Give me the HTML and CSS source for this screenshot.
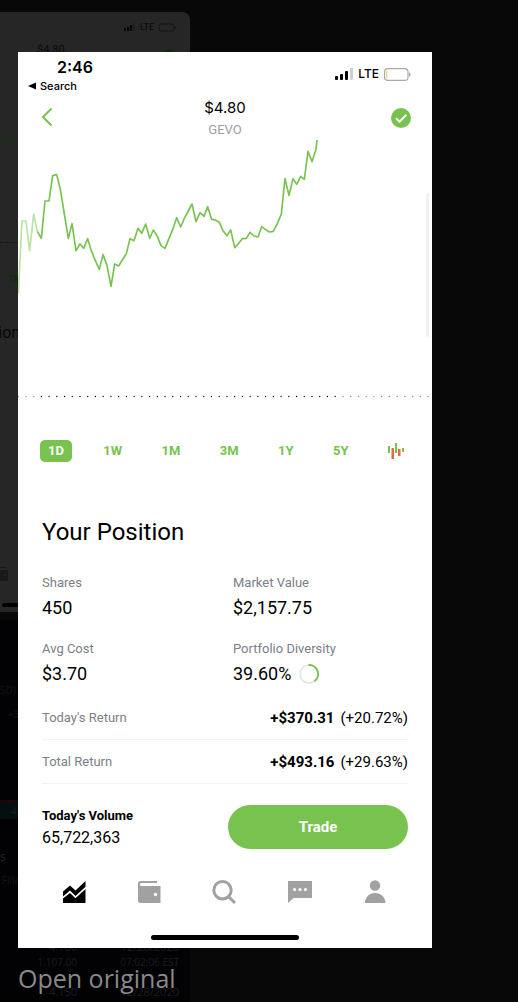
FILE: index.html
```html
<!DOCTYPE html>
<html lang="en">
<head>
<meta charset="UTF-8">
<meta name="viewport" content="width=device-width, initial-scale=1">
<title>GEVO</title>
<link rel="stylesheet" href="styles.css">
</head>
<body>

<!-- Dimmed chat behind the viewer -->
<div class="backdrop" aria-hidden="true">
  <div class="thumb">
    <div class="thumb-status">
      <svg width="12" height="8" viewBox="0 0 12 8"><path d="M0 5h2v3H0zM3 4h2v4H3zM6 2h2v6H6z" fill="#050505"/><path d="M9 0h2v8H9z" fill="#1e1e1e"/></svg>
      <span>LTE</span>
      <svg width="18" height="9" viewBox="0 0 18 9"><rect x="1" y="1" width="15" height="7" rx="2" fill="none" stroke="#151515"/><path d="M17 3v3" stroke="#151515"/></svg>
    </div>
    <div class="thumb-head"><span>$4.80</span><i class="thumb-dot"></i></div>
    <svg class="thumb-line" width="20" height="24" viewBox="0 0 20 24"><path d="M0 16l4-4 5 10 3 1 6-13 2-8" fill="none" stroke="#15350d"/></svg>
    <div class="thumb-dots"></div>
    <div class="thumb-range">1M</div>
    <div class="thumb-title">tion</div>
    <svg class="thumb-wallet" width="8" height="16" viewBox="0 0 8 16"><path d="M0 1h6v1H0zM0 4h8v11H0z" fill="#191919"/><circle cx="5" cy="9" r="1" fill="#262626"/></svg>
    <div class="thumb-home"></div>
  </div>
  <div class="post">
    <p class="post-currency">SD)</p>
    <p class="post-change">+3</p>
    <p class="post-band">4.</p>
    <p class="post-heading">s</p>
    <p class="post-filled">Filled</p>
    <table class="orders">
      <tr><td>4.160</td><td>12/28/2020</td></tr>
      <tr class="orders-sub"><td>1,107.00</td><td>07:02:06 EST</td></tr>
      <tr><td>4.150</td><td>12/28/2020</td></tr>
    </table>
  </div>
</div>

<div class="viewer">
  <main class="phone">
    <div class="status">
      <div>
        <div class="time">2:46</div>
        <a href="#" class="back-app"><svg width="8" height="8" viewBox="0 0 8 8"><path d="M0 4l8-3.500v7z"/></svg>Search</a>
      </div>
      <div class="signal">
        <svg width="18" height="12" viewBox="0 0 18 12">
          <rect x="0" y="8" width="3" height="4" rx="1"/><rect x="5" y="6" width="3" height="6" rx="1"/>
          <rect x="10" y="3" width="3" height="9" rx="1"/><rect x="15" y="0" width="3" height="12" rx="1" fill="#cfcfcf"/>
        </svg>
        <span>LTE</span>
        <svg width="27" height="13" viewBox="0 0 27 13">
          <rect x=".6" y=".6" width="23.400" height="11.800" rx="3.200" fill="#fff" stroke="#a9a9ab" stroke-width="1.200"/>
          <path d="M3.500 2.500v8c-1 0-1.500-.5-1.500-1.500v-5c0-1 .5-1.500 1.500-1.500z" fill="#fbd779"/>
          <path d="M25 4.200c2 .8 2 3.800 0 4.600z" fill="#a9a9ab"/>
        </svg>
      </div>
    </div>

    <header class="header">
      <button class="icon-btn" aria-label="Back">
        <svg width="12" height="20" viewBox="0 0 12 20"><path d="M10.500 1.500L2 10l8.500 8.500" fill="none" stroke="#78c350" stroke-width="2"/></svg>
      </button>
      <div class="quote">
        <h1>$4.80</h1>
        <p>GEVO</p>
      </div>
      <button class="icon-btn icon-btn-end" aria-label="On watchlist">
        <svg width="20" height="20" viewBox="0 0 20 20"><circle cx="10" cy="10" r="10" fill="#78c350"/><path d="M5 10.200l3.600 3.500 6.700-6.800" fill="none" stroke="#fff" stroke-width="2"/></svg>
      </button>
    </header>

    <svg class="chart" viewBox="54 30 1242 786" role="img" aria-label="GEVO price, one day">
      <polyline class="line line-pre" points="55,490 66,273 78,273 89,362 101,252 112,304"/>
      <polyline class="line" points="112,304 124,325 135,213 147,213 158,137 170,134 181,178 193,252 205,325 216,281 228,362 240,342 251,355 263,326 274,362 286,392 298,418 309,374 321,406 333,469 344,402 356,408 367,390 379,371 390,326 402,332 414,295 425,310 437,282 449,325 460,300 472,319 483,347 495,355 507,325 518,299 530,263 542,291 553,265 565,243 576,222 588,275 600,248 612,259 623,230 635,268 646,270 658,277 669,302 681,317 692,300 704,353 716,340 727,326 739,325 750,307 762,318 774,321 785,290 797,299 808,306 820,304 832,281 844,252 855,146 867,196 879,146 890,163 902,139 913,148 924,64 936,95 948,58 951,30"/>
      <path class="dots dots-off" d="M55 799.500H104"/>
      <path class="dots" d="M124 799.500H1010"/>
      <path class="dots dots-off" d="M1029 799.500H1290"/>
    </svg>
    <div class="scrollbar"></div>

    <div class="ranges">
      <button class="active">1D</button>
      <button>1W</button>
      <button>1M</button>
      <button>3M</button>
      <button>1Y</button>
      <button>5Y</button>
      <button aria-label="Candlestick chart">
        <svg width="16" height="16" viewBox="0 0 16 16">
          <path d="M0 3h2v7H0zM7 0h2v10H7zM14 5h2v4h-2z" fill="#78c350"/>
          <path d="M3.500 5h2.500v11H3.500zM10 6h2.500v7H10z" fill="#e56b45"/>
        </svg>
      </button>
    </div>

    <section class="position">
      <h2>Your Position</h2>
      <dl class="stats">
        <div><dt>Shares</dt><dd>450</dd></div>
        <div><dt>Market Value</dt><dd>$2,157.75</dd></div>
        <div><dt>Avg Cost</dt><dd>$3.70</dd></div>
        <div>
          <dt>Portfolio Diversity</dt>
          <dd>39.60%
            <svg width="20" height="20" viewBox="0 0 20 20" fill="none" stroke-width="1.700"><circle cx="10" cy="10" r="9" stroke="#e3e6e9"/><path d="M9.500 1A9 9 0 0 1 15.300 17.300" stroke="#78c350" stroke-width="2"/></svg>
          </dd>
        </div>
      </dl>
      <dl class="returns">
        <div><dt>Today's Return</dt><dd><b>+$370.31</b>(+20.72%)</dd></div>
        <div><dt>Total Return</dt><dd><b>+$493.16</b>(+29.63%)</dd></div>
      </dl>
    </section>

    <div class="trade-bar">
      <div class="volume">
        <b>Today's Volume</b>
        <p>65,722,363</p>
      </div>
      <button class="trade">Trade</button>
    </div>

    <nav class="tabs">
      <a href="#" aria-label="Investing"><svg width="24" height="24" viewBox="0 0 24 24" fill="#000"><path d="M1 11.500L8 5.500l5.500 5L23.500 1v5.800l-10 9.200L8 10.500l-7 6z"/><path d="M1 18.500l7-5.500 5.500 5.300L23.500 9v14H1z"/></svg></a>
      <a href="#" aria-label="Cash"><svg width="24" height="24" viewBox="0 0 24 24"><path d="M3.500 1H20v2H4.300C3.300 3 3 3.500 3 4.500S3.500 6 4.500 6h19v17H3.500C2 23 1 22 1 20.500v-17C1 2 2 1 3.500 1z"/><circle cx="18.500" cy="14.500" r="1.700" fill="#fff"/></svg></a>
      <a href="#" aria-label="Search"><svg width="24" height="24" viewBox="0 0 24 24"><path d="M10.500 1.500a8.700 8.700 0 1 0 0 17.400 8.700 8.700 0 0 0 0-17.400zM16 16l7 7" fill="none" stroke="#a1a1a1" stroke-width="3"/></svg></a>
      <a href="#" aria-label="Messages"><svg width="24" height="24" viewBox="0 0 24 24"><path d="M0 1h24v17H5.500L0 23z"/><g fill="#fff"><circle cx="6.500" cy="9.500" r="1.600"/><circle cx="12" cy="9.500" r="1.600"/><circle cx="17.500" cy="9.500" r="1.600"/></g></svg></a>
      <a href="#" aria-label="Account"><svg width="24" height="24" viewBox="0 0 24 24"><circle cx="12" cy="5.500" r="5.200"/><path d="M2 23c0-6 4.500-10 10-10s10.500 4 10.500 10z"/></svg></a>
    </nav>
    <div class="home-bar"></div>
  </main>
  <a href="#" class="open-original">Open original</a>
</div>

</body>
</html>
```
FILE: styles.css
```css
* {
    margin: 0;
    padding: 0;
    box-sizing: border-box;
}

body {
    font-family: Roboto, sans-serif;
    background: #080808;
    color: #000;
    min-height: 100vh;
    position: relative;
    overflow: hidden;
}

button {
    font: inherit;
    border: none;
    background: none;
    cursor: pointer;
}

a {
    color: inherit;
    text-decoration: none;
}

svg {
    display: block;
}

/* Backdrop */
.backdrop {
    position: absolute;
    inset: 0;
    width: 190px;
    padding-top: 12px;
    overflow: hidden;
}

.thumb {
    height: 600px;
    padding-top: 7px;
    background: #262626;
    border-radius: 0 8px 0 0;
    overflow: hidden;
}

.thumb-status {
    display: flex;
    justify-content: flex-end;
    align-items: center;
    gap: 4px;
    height: 16px;
    padding-right: 14px;
    font-size: 9px;
    color: #090909;
}

.thumb-head {
    display: flex;
    justify-content: space-between;
    margin-top: 6px;
    padding: 0 15px 0 37px;
    font-size: 11px;
    line-height: 18px;
    color: #0a0a0a;
}

.thumb-dot {
    width: 12px;
    height: 12px;
    margin-top: 8px;
    border-radius: 50%;
    background: #12290c;
}

.thumb-line {
    margin-top: 60px;
}

.thumb-dots {
    width: 18px;
    margin-top: 97px;
    border-top: 1px dotted #111;
}

.thumb-range {
    margin-top: 28px;
    padding-left: 8px;
    font-size: 9px;
    line-height: 16px;
    font-weight: bold;
    color: #12290c;
}

.thumb-title {
    margin-top: 36px;
    font-size: 16px;
    line-height: 20px;
    color: #060606;
    text-indent: -7px;
}

.thumb-wallet {
    margin-top: 223px;
}

.thumb-home {
    width: 60px;
    height: 4px;
    margin: 21px 0 0 2px;
    border-radius: 2px;
    background: #000;
}

.post {
    min-height: 380px;
    margin-top: 8px;
    padding-top: 62px;
    background: #020204;
    border-bottom: 2px solid #000;
    color: #141418;
    font-family: "Open Sans", sans-serif;
    font-size: 10px;
    line-height: 16px;
}

.post-change {
    margin-top: 8px;
    padding-left: 8px;
    color: #08160f;
    font-weight: bold;
}

.post-band {
    margin-top: 78px;
    padding-left: 11px;
    line-height: 16px;
    border-top: 3px solid #1d070b;
    background: #04100f;
    color: #082018;
}

.post-heading {
    margin-top: 30px;
    font-size: 12px;
    color: #222226;
}

.post-filled {
    margin-top: 7px;
    padding-left: 2px;
}

.orders {
    width: 179px;
    margin-top: 51px;
    border-collapse: collapse;
    text-align: right;
    font-size: 11px;
    line-height: 16px;
    color: #1c1c20;
}

.orders td:first-child {
    width: 77px;
}

.orders-sub td {
    padding-bottom: 15px;
    font-size: 10px;
    line-height: 14px;
}

/* Viewer */
.viewer {
    position: relative;
    padding: 52px 86px 0 18px;
}

.phone {
    position: relative;
    padding-bottom: 8px;
    background: #fff;
}

.open-original {
    display: inline-block;
    margin-top: 12px;
    font-family: "Open Sans", sans-serif;
    font-size: 25px;
    line-height: 36px;
    color: #898989;
}

/* Status bar */
.status {
    display: flex;
    justify-content: space-between;
    align-items: flex-start;
    padding: 5px 21px 0 10px;
    font-family: Inter, sans-serif;
}

.time {
    padding-left: 29px;
    font-size: 16px;
    line-height: 20px;
    font-weight: 600;
}

.back-app {
    display: flex;
    align-items: center;
    gap: 4px;
    padding-top: 1px;
    font-size: 11px;
    line-height: 16px;
    font-weight: 500;
}

.signal {
    display: flex;
    align-items: center;
    gap: 5px;
    padding-top: 9px;
    font-size: 12px;
    line-height: 16px;
    font-weight: 500;
}

/* Header */
.header {
    display: grid;
    grid-template-columns: 1fr auto 1fr;
    align-items: start;
    padding: 4px 21px 0;
}

.icon-btn {
    justify-self: start;
    padding: 9px 2px 0;
}

.icon-btn-end {
    justify-self: end;
    padding: 10px 0 0;
}

.quote {
    text-align: center;
}

.quote h1 {
    font-family: Inter, sans-serif;
    font-size: 15px;
    line-height: 20px;
    font-weight: 400;
}

.quote p {
    padding-top: 2px;
    font-size: 13px;
    line-height: 20px;
    color: #9a9fa6;
}

/* Chart */
.chart {
    width: 100%;
    height: auto;
}

.line {
    fill: none;
    stroke: #78c350;
    stroke-width: 5;
    stroke-linejoin: round;
}

.line-pre {
    stroke: #b9e3a6;
}

.dots {
    stroke: #000;
    stroke-width: 4;
    stroke-linecap: round;
    stroke-dasharray: 0 23.2;
}

.dots-off {
    stroke: #888;
}

.scrollbar {
    position: absolute;
    top: 141px;
    right: 3px;
    width: 3px;
    height: 144px;
    border-radius: 2px;
    background: #f1f1f1;
}

.ranges {
    display: flex;
    justify-content: space-between;
    align-items: center;
    margin-top: 38px;
    padding: 0 20px 0 22px;
}

.ranges button {
    padding: 0 8px;
    border-radius: 5px;
    font-size: 13px;
    line-height: 22px;
    font-weight: 700;
    color: #78c350;
}

.ranges .active {
    background: #78c350;
    color: #fff;
}

/* Position */
.position {
    padding: 54px 24px 0;
}

.position h2 {
    margin-bottom: 26px;
    font-size: 24px;
    line-height: 32px;
    font-weight: 400;
}

.position dt {
    font-size: 13px;
    line-height: 18px;
    color: #7b8087;
}

.stats {
    display: grid;
    grid-template-columns: 1fr 1fr;
    gap: 20px 16px;
}

.stats dd {
    display: flex;
    align-items: center;
    gap: 8px;
    margin-top: 4px;
    font-size: 18px;
    line-height: 24px;
}

.returns {
    margin-top: 10px;
}

.returns div {
    display: flex;
    justify-content: space-between;
    align-items: center;
    height: 44px;
    border-bottom: 1px solid #f3f3f4;
}

.returns dd {
    font-size: 15px;
    line-height: 20px;
}

.returns b {
    margin-right: 6px;
}

/* Trade */
.trade-bar {
    display: flex;
    justify-content: space-between;
    align-items: center;
    padding: 21px 24px 0;
}

.volume {
    font-size: 16px;
    line-height: 22px;
}

.volume b {
    display: block;
    font-size: 13px;
    line-height: 22px;
}

.trade {
    width: 180px;
    height: 44px;
    border-radius: 22px;
    background: #78c350;
    color: #fff;
    font-size: 15px;
    font-weight: 700;
}

.tabs {
    display: grid;
    grid-template-columns: repeat(5, 1fr);
    justify-items: center;
    margin-top: 31px;
    padding: 0 19px 0 18px;
    fill: #a1a1a1;
}

.home-bar {
    width: 148px;
    height: 5px;
    margin: 31px auto 0;
    border-radius: 3px;
    background: #000;
}
```
